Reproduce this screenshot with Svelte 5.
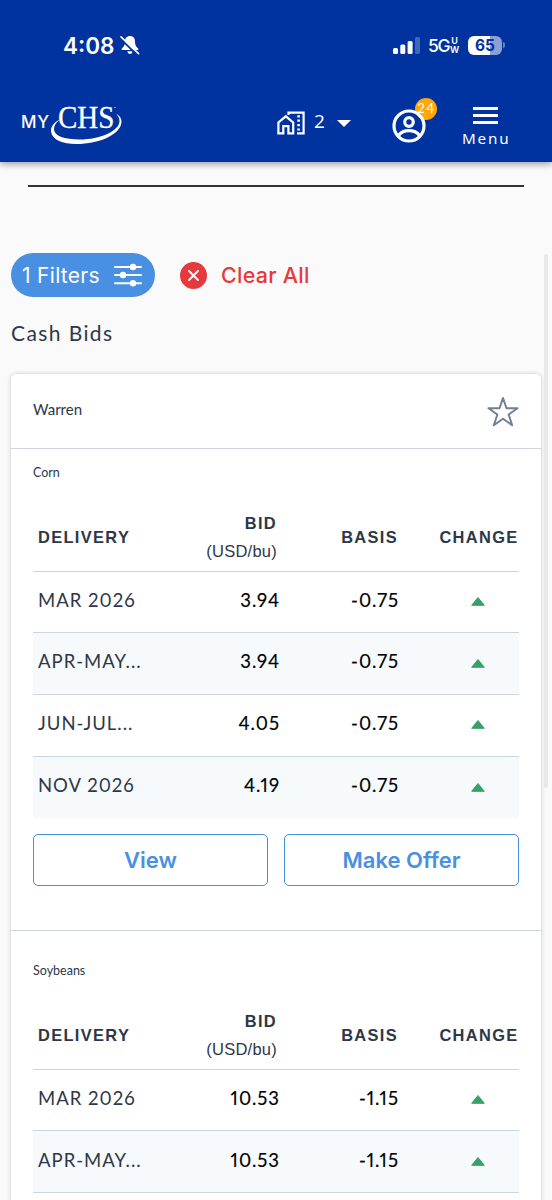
<script lang="ts">
   type Bid = { delivery: string; bid: string; basis: string };
   type Commodity = { name: string; bids: Bid[]; actions: boolean };

   const location = "Warren";
   const filterCount = 1;
   const notifications = 24;

   const commodities: Commodity[] = [
      {
         name: "Corn",
         actions: true,
         bids: [
            { delivery: "MAR 2026", bid: "3.94", basis: "-0.75" },
            { delivery: "APR-MAY...", bid: "3.94", basis: "-0.75" },
            { delivery: "JUN-JUL...", bid: "4.05", basis: "-0.75" },
            { delivery: "NOV 2026", bid: "4.19", basis: "-0.75" },
         ],
      },
      {
         name: "Soybeans",
         actions: false,
         bids: [
            { delivery: "MAR 2026", bid: "10.53", basis: "-1.15" },
            { delivery: "APR-MAY...", bid: "10.53", basis: "-1.15" },
         ],
      },
   ];

   let favorite = $state(false);
</script>

<div class="screen">
   <header class="top">
      <div class="status">
         <span class="time">4:08</span>
         <svg class="bell" width="20" height="20" viewBox="0 0 20 20">
            <path
               d="M10 1c-3.300 0-5 2.400-5 5.200 0 4-1.200 5.300-3.100 7.200-.7.8-.3 1.600.7 1.600h14.800c1 0 1.400-.8.7-1.600C16.200 11.500 15 10.200 15 6.200 15 3.400 13.300 1 10 1zM7.400 16.300h5.200c-.3 1.700-1.200 2.700-2.600 2.700s-2.300-1-2.600-2.700z"
               fill="#fff"
            />
            <path d="M0 3.200 17 20" stroke="#0033a0" stroke-width="1.800" />
            <path d="M1 1.800 18.600 18.700" stroke="#fff" stroke-width="1.600" stroke-linecap="round" />
         </svg>
         <svg class="signal" width="27" height="17" viewBox="0 0 27 17" fill="#fff">
            <rect x="0" y="11" width="5" height="6" rx="1.500" />
            <rect x="7.300" y="7.500" width="5" height="9.500" rx="1.500" />
            <rect x="14.600" y="4" width="5" height="13" rx="1.500" />
            <rect x="22" y="0" width="5" height="17" rx="1.500" opacity=".25" />
         </svg>
         <span class="network">5G</span>
         <span class="uw"><span>U</span><span>W</span></span>
         <div class="battery">65</div>
         <i class="tip"></i>
      </div>

      <nav class="nav">
         <svg class="logo" width="104" height="42" viewBox="0 0 104 42" fill="#fff">
            <text x="1" y="24.500" class="my" textLength="28">MY</text>
            <text x="38" y="24.500" class="chs" textLength="56.500" lengthAdjust="spacingAndGlyphs">CHS</text>
            <path
               d="M40 16.500C34 19 30.500 24 31 28.500 32 37 43 41 56 41c24 0 45.500-10 45.500-22.500 0-3.500-2-6-6-8 2.700 2 4 4.500 4 7.500C99.500 28 80 36.500 60 36.500 44 36.500 34.500 33 34 26.500c-.3-3.500 2-7 6-10z"
            />
            <circle cx="95" cy="4.500" r=".6" />
         </svg>

         <div class="sites">
            <svg width="28" height="24" viewBox="0 0 28 24" fill="none" stroke="#fff" stroke-width="2.200">
               <path d="M11.500 4V1.600H26.600V22.400H20" />
               <path d="M1.400 22.400V11.500L8.800 5.300 16.200 11.500V22.400H11.400V15.200H6.300V22.400z" />
               <path d="M20.300 5.300h2.600M20.300 9.700h2.600M20.300 14.100h2.600M20.300 18.500h2.600" />
            </svg>
            <span>2</span>
            <svg width="14" height="7" viewBox="0 0 14 7"><path d="M0 0h14L7 7z" fill="#fff" /></svg>
         </div>

         <div class="profile">
            <span class="badge">{notifications}</span>
            <svg width="34" height="34" viewBox="0 0 34 34" fill="none" stroke="#fff" stroke-width="3.200">
               <circle cx="17" cy="17" r="15" />
               <circle cx="17" cy="13" r="4.300" />
               <path d="M6.500 26.500C9 23.300 13 21.700 17 21.700s8 1.600 10.500 4.800" />
            </svg>
         </div>

         <button class="menu" type="button">
            <i></i><i></i><i></i>
            <span>Menu</span>
         </button>
      </nav>
   </header>

   <main>
      <hr />

      <div class="filters">
         <button class="pill" type="button">
            <span>{filterCount} Filters</span>
            <svg width="28" height="24" viewBox="0 0 28 24" fill="#fff">
               <path d="M1 4h26M1 12h26M1 20.300h26" stroke="#fff" stroke-width="2" stroke-linecap="round" />
               <circle cx="19" cy="4" r="3.200" />
               <circle cx="9" cy="12" r="3.200" />
               <circle cx="19" cy="20.300" r="3.200" />
            </svg>
         </button>
         <button class="clear" type="button">
            <svg width="27" height="27" viewBox="0 0 27 27">
               <circle cx="13.500" cy="13.500" r="13.500" fill="#e53a3d" />
               <path d="M9 9l9 9M18 9l-9 9" stroke="#fff" stroke-width="2" stroke-linecap="round" />
            </svg>
            <span>Clear All</span>
         </button>
      </div>

      <h1>Cash Bids</h1>

      <section class="card">
         <div class="card-head">
            <span>{location}</span>
            <button class="star" type="button" aria-label="Favorite" onclick={() => (favorite = !favorite)}>
               <svg width="32" height="31" viewBox="0 0 32 31">
                  <path
                     d="M16 2 19.500 12.200H30.500L21.600 18.500 25.200 29.200 16 22.700 6.800 29.200 10.400 18.500 1.500 12.200H12.500z"
                     fill={favorite ? "#718096" : "none"}
                     stroke="#718096"
                     stroke-width="2"
                     stroke-linejoin="round"
                  />
               </svg>
            </button>
         </div>

         {#each commodities as commodity}
            <div class="commodity">
               <h2>{commodity.name}</h2>
               <div class="row head">
                  <span class="delivery">DELIVERY</span>
                  <span class="bid">BID<small>(USD/bu)</small></span>
                  <span class="basis">BASIS</span>
                  <span class="change">CHANGE</span>
               </div>
               {#each commodity.bids as b}
                  <div class="row">
                     <span class="delivery">{b.delivery}</span>
                     <span class="num">{b.bid}</span>
                     <span class="num">{b.basis}</span>
                     <span class="change">
                        <svg width="14" height="9" viewBox="0 0 14 9">
                           <path d="M7 .5 13.300 8.300H.7z" fill="#38a169" stroke="#38a169" stroke-linejoin="round" />
                        </svg>
                     </span>
                  </div>
               {/each}
               {#if commodity.actions}
                  <div class="actions">
                     <button type="button">View</button>
                     <button type="button">Make Offer</button>
                  </div>
               {/if}
            </div>
         {/each}
      </section>
   </main>
   <div class="scrollbar"></div>
</div>

<style>
   :global(body) {
      background: #fafafa;
   }
   .screen {
      position: relative;
      height: 1200px;
      overflow: hidden;
      background: #fafafa;
      color: #2d3748;
      font-family: Lato, sans-serif;
   }
   button {
      margin: 0;
      padding: 0;
      border: none;
      background: none;
      font: inherit;
      color: inherit;
      cursor: pointer;
   }
   svg {
      display: block;
      flex: none;
   }

   .top {
      height: 162px;
      box-sizing: border-box;
      padding-top: 30px;
      background: #0033a0;
      color: #fff;
      box-shadow: 0 2px 7px rgba(0, 0, 0, 0.4);
   }
   .status {
      display: flex;
      align-items: center;
      height: 30px;
      padding-left: 63px;
      font-family: Inter, sans-serif;
      font-weight: 600;
   }
   .time {
      width: 57px;
      font-size: 22.5px;
   }
   .signal {
      margin-left: 253px;
   }
   .network {
      width: 22px;
      margin-left: 8px;
      font-size: 17.5px;
      font-weight: 500;
      letter-spacing: -1.4px;
   }
   .uw {
      display: flex;
      flex-direction: column;
      align-items: center;
      width: 9px;
      font-size: 9px;
      line-height: 9px;
   }
   .battery {
      width: 34px;
      height: 19px;
      margin-left: 9px;
      border-radius: 6px;
      background: linear-gradient(90deg, #fff 65%, #8a9fd3 65%);
      color: #0033a0;
      font-size: 15.5px;
      font-weight: 700;
      line-height: 19px;
      text-align: center;
   }
   .tip {
      width: 2px;
      height: 6px;
      margin-left: 1px;
      border-radius: 0 2px 2px 0;
      background: #6680c4;
   }

   .nav {
      display: flex;
      align-items: flex-start;
      padding: 43px 0 0 20px;
   }
   .logo {
      overflow: visible;
   }
   .my {
      font-family: Inter, sans-serif;
      font-size: 17px;
      font-weight: 500;
   }
   .chs {
      font-family: "Liberation Serif", serif;
      font-size: 32px;
      stroke: #fff;
      stroke-width: 0.3px;
   }
   .sites {
      display: flex;
      align-items: center;
      margin: 8px 0 0 153px;
   }
   .sites span {
      width: 23px;
      margin-top: -4px;
      padding-left: 9px;
      font-family: "Open Sans", sans-serif;
      font-size: 19px;
      line-height: 24px;
   }
   .profile {
      position: relative;
      margin: 6px 0 0 41px;
   }
   .profile svg {
      position: relative;
   }
   .badge {
      position: absolute;
      left: 23px;
      top: -11px;
      width: 22px;
      height: 22px;
      box-sizing: border-box;
      padding-left: 1px;
      border-radius: 50%;
      background: #ffa80a;
      font-size: 13px;
      letter-spacing: 1.6px;
      line-height: 20px;
      text-align: center;
   }
   .menu {
      display: flex;
      flex-direction: column;
      align-items: center;
      gap: 4px;
      margin: 4px 0 0 36px;
   }
   .menu i {
      width: 25px;
      height: 3px;
      background: #fff;
   }
   .menu span {
      margin-right: -2px;
      font-family: "Noto Sans", sans-serif;
      font-size: 15.2px;
      line-height: 20px;
      letter-spacing: 1.8px;
   }

   main {
      padding: 0 11px;
   }
   hr {
      height: 2px;
      margin: 23px 17px 0;
      border: none;
      background: #333;
   }
   .filters {
      display: flex;
      align-items: center;
      margin-top: 66px;
      font-family: Inter, sans-serif;
      font-size: 21px;
   }
   .pill {
      display: flex;
      align-items: center;
      justify-content: space-between;
      width: 144px;
      height: 44px;
      box-sizing: border-box;
      padding: 0 13px 0 11px;
      border-radius: 22px;
      background: #4a90e2;
      color: #fff;
      letter-spacing: 0.3px;
   }
   .clear {
      display: flex;
      align-items: center;
      gap: 14px;
      margin-left: 25px;
      color: #e53a3d;
      font-size: 21.5px;
      font-weight: 500;
      letter-spacing: 0.25px;
   }
   h1 {
      margin: 21px 0 26px;
      font-size: 21px;
      font-weight: 400;
      line-height: 30px;
      letter-spacing: 1.4px;
   }

   .card {
      border-radius: 5px;
      background: #fff;
      box-shadow: 0 0 4px rgba(0, 0, 0, 0.22);
   }
   .card-head {
      display: flex;
      align-items: center;
      justify-content: space-between;
      height: 74px;
      padding: 0 22px;
      border-bottom: 1px solid #cbd5e0;
      font-size: 15px;
   }
   .card-head span {
      margin-top: -4px;
   }
   .commodity {
      padding: 12px 22px 44px;
      border-bottom: 1px solid #cbd5e0;
   }
   .commodity + .commodity {
      padding-top: 28px;
   }
   h2 {
      margin: 0;
      font-size: 12.5px;
      font-weight: 400;
      line-height: 24px;
   }
   .row {
      display: grid;
      grid-template-columns: 132px 115px 119px 1fr;
      align-items: center;
      height: 61.7px;
      box-sizing: border-box;
      padding-bottom: 4.5px;
      border-bottom: 1px solid #cbd5e0;
      font-size: 18.5px;
      letter-spacing: 1px;
      font-variant-numeric: proportional-nums;
   }
   .row:nth-child(even):not(.head) {
      background: #f7fafc;
   }
   .row:nth-last-child(2):nth-child(n + 5) {
      border-bottom: none;
   }
   .head {
      height: auto;
      padding: 23.5px 0 6px;
      font-family: "Liberation Sans", sans-serif;
      font-size: 16.4px;
      font-weight: 700;
      letter-spacing: 1.35px;
      line-height: 28px;
   }
   .head .bid,
   .head .basis {
      padding-right: 3px;
      text-align: right;
   }
   .head .basis {
      padding-right: 1px;
   }
   .head small {
      display: block;
      font-size: 16.5px;
      font-weight: 400;
      letter-spacing: 0.25px;
   }
   .delivery {
      padding-left: 5px;
      white-space: nowrap;
   }
   .num {
      color: #000;
      text-align: right;
      -webkit-text-stroke: 0.15px #000;
   }
   .change {
      display: flex;
      justify-content: center;
      padding-left: 38px;
   }
   .head .change {
      padding-left: 40px;
   }
   .row:not(.head) .change {
      padding-top: 4px;
   }
   .actions {
      display: grid;
      grid-template-columns: 1fr 1fr;
      gap: 16px;
      margin-top: 16px;
   }
   .actions button {
      height: 52px;
      border: 1.4px solid #4a90e2;
      border-radius: 5px;
      color: #4a90e2;
      font-family: Inter, sans-serif;
      font-size: 22px;
      font-weight: 600;
   }
   .scrollbar {
      position: absolute;
      right: 4px;
      top: 254px;
      width: 4px;
      height: 534px;
      border-radius: 2px;
      background: #e8e8e8;
   }
</style>
